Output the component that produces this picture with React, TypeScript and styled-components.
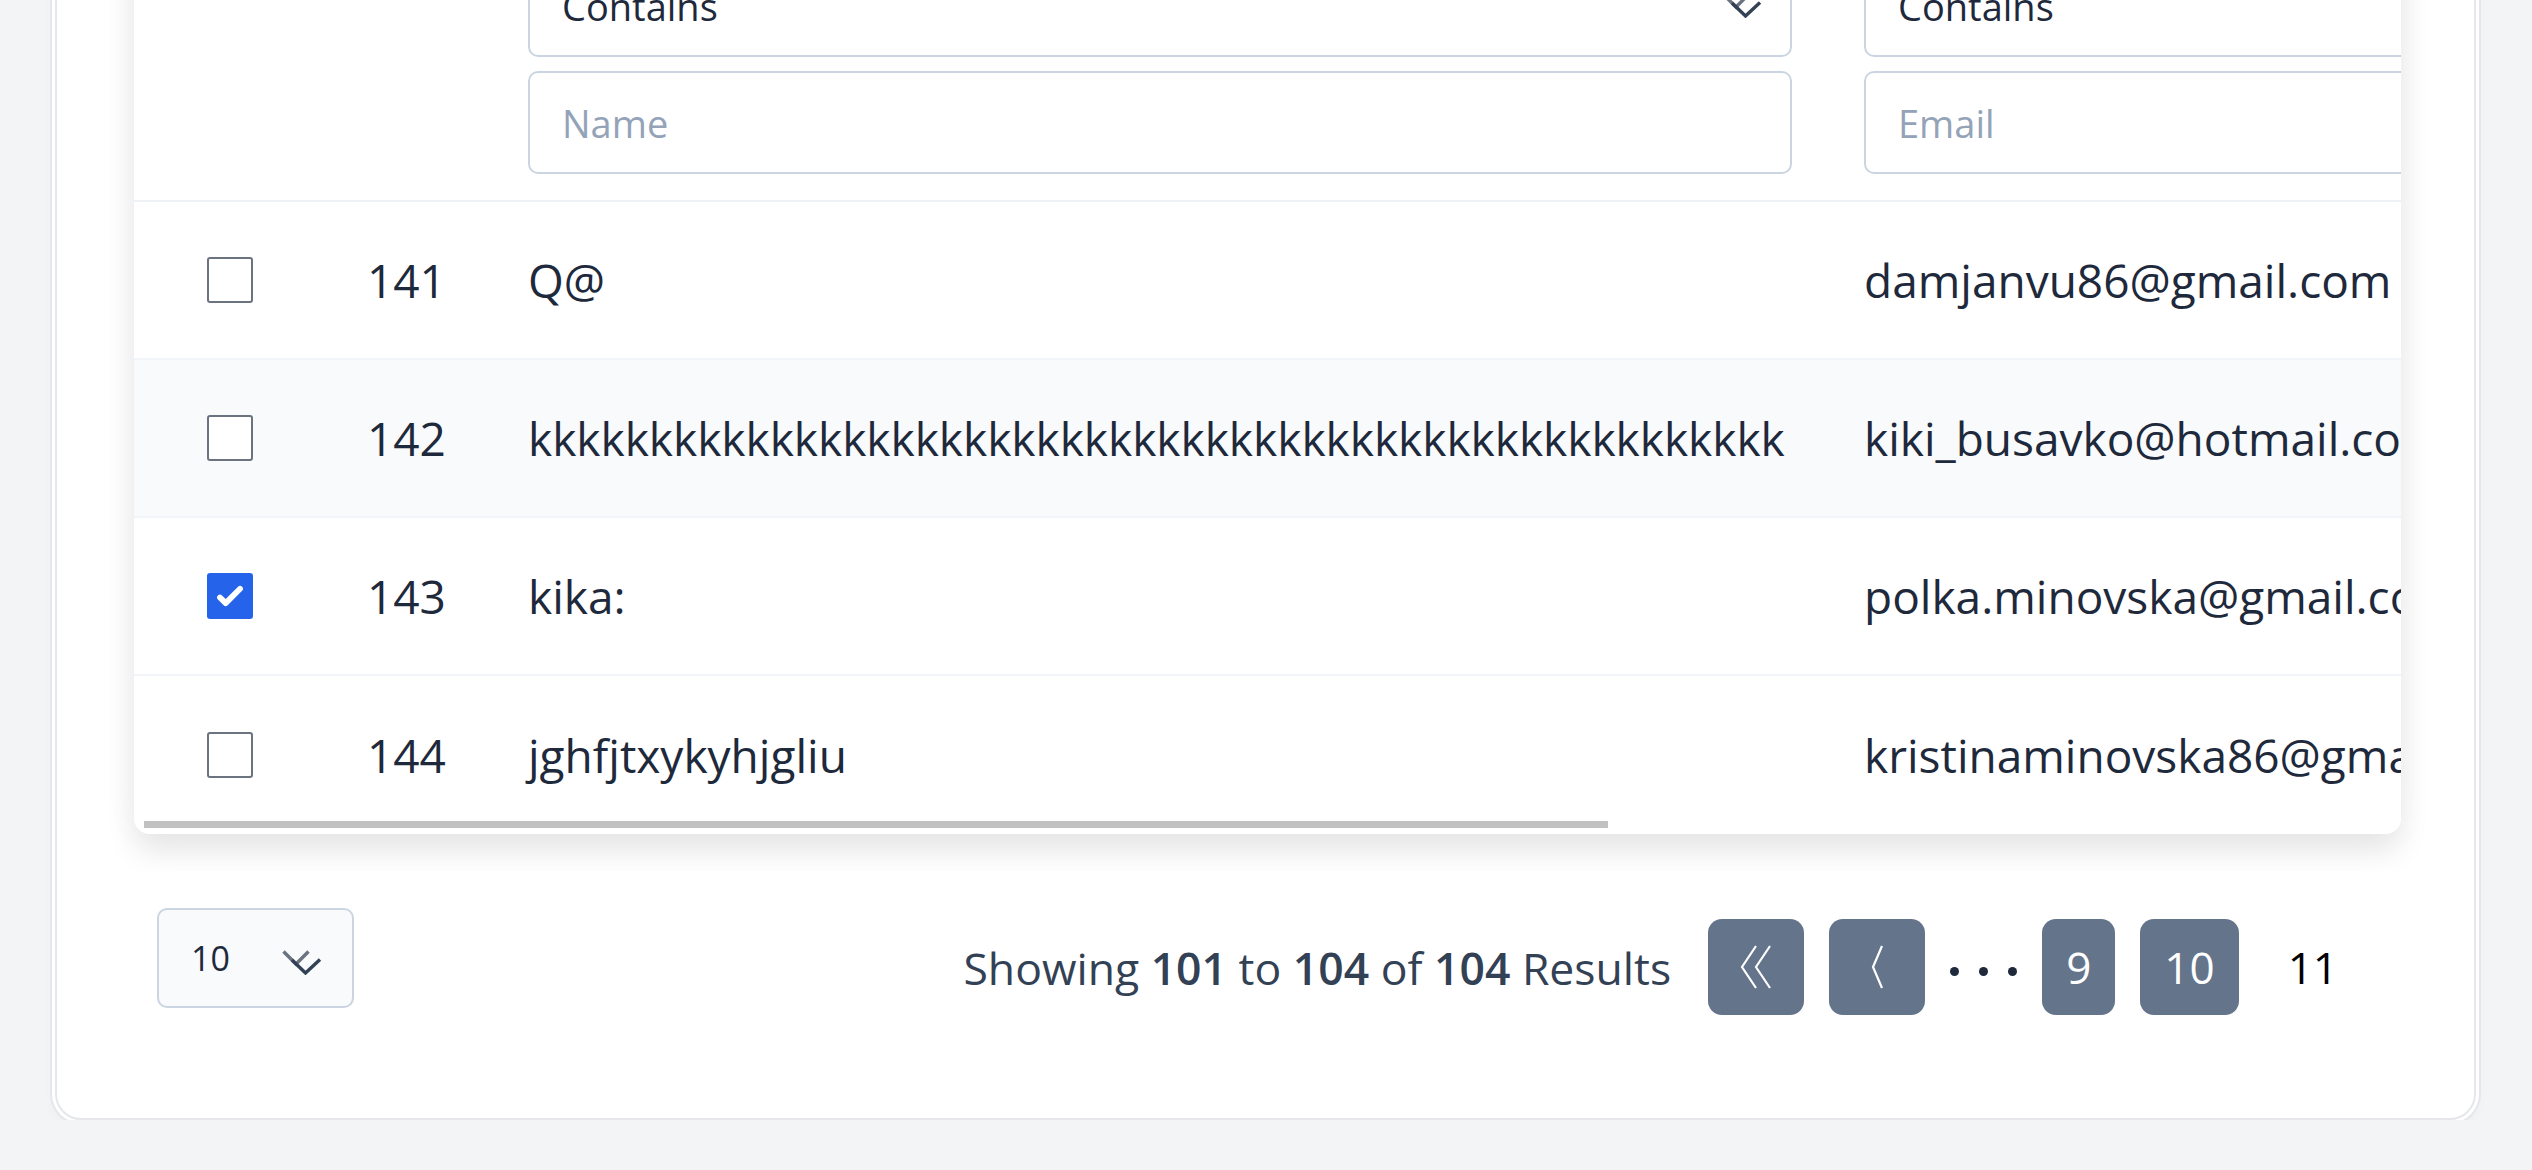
import React from "react";
import styled, { createGlobalStyle } from "styled-components";

const COLUMNS = "197px 161px 1336px 1336px 480px";

type User = {
  id: number;
  name: string;
  email: string;
  checked?: boolean;
  shaded?: boolean;
};

const users: User[] = [
  { id: 141, name: "Q@", email: "damjanvu86@gmail.com" },
  { id: 142, name: "k".repeat(52), email: "kiki_busavko@hotmail.com", shaded: true },
  { id: 143, name: "kika:", email: "polka.minovska@gmail.com", checked: true },
  { id: 144, name: "jghfjtxykyhjgliu", email: "kristinaminovska86@gmail.com" },
];

const GlobalStyle = createGlobalStyle`
  html, body {
    margin: 0;
    padding: 0;
    background: #f3f4f6;
    overflow: hidden;
  }
  body {
    font-family: "Segoe UI", "Open Sans", "Noto Sans", sans-serif;
    color: #1e293b;
  }
  * {
    box-sizing: border-box;
  }
`;

const SelectChevron = () => (
  <svg width="40" height="25" viewBox="0 0 40 25" fill="none">
    <polyline points="1.5,1.5 14,14 26.5,1.5" stroke="#6b7280" strokeWidth="3.4" />
    <polyline points="10,10 23.5,23 38,9.5" stroke="#334155" strokeWidth="3.4" />
  </svg>
);

const DoubleLeft = () => (
  <svg width="34" height="44" viewBox="0 0 34 44" fill="none">
    <polyline points="17,1 3,22 17,43" stroke="#fff" strokeWidth="2.2" />
    <polyline points="31,1 17,22 31,43" stroke="#fff" strokeWidth="2.2" />
  </svg>
);

const SingleLeft = () => (
  <svg width="14" height="44" viewBox="0 0 14 44" fill="none">
    <polyline points="12,1 3,22 12,43" stroke="#fff" strokeWidth="2.2" />
  </svg>
);

const CheckMark = () => (
  <svg width="46" height="46" viewBox="0 0 16 16" fill="#fff">
    <path d="M12.207 4.793a1 1 0 010 1.414l-5 5a1 1 0 01-1.414 0l-2-2a1 1 0 011.414-1.414L6.5 9.086l4.293-4.293a1 1 0 011.414 0z" />
  </svg>
);

export default function App() {
  return (
    <>
      <GlobalStyle />
      <Page>
        <Panel>
          <TableCard>
            <TableGrid>
              <HeaderRow>
                <HeaderCell />
                <HeaderCell />
                <HeaderCell>
                  <FilterSelect>
                    <span>Contains</span>
                    <SelectChevron />
                  </FilterSelect>
                  <FilterInput placeholder="Name" />
                </HeaderCell>
                <HeaderCell>
                  <FilterSelect>
                    <span>Contains</span>
                    <SelectChevron />
                  </FilterSelect>
                  <FilterInput placeholder="Email" />
                </HeaderCell>
                <HeaderCell />
              </HeaderRow>
              {users.map((u) => (
                <Row key={u.id} $shaded={u.shaded}>
                  <CheckCell>
                    <Checkbox $checked={u.checked}>{u.checked && <CheckMark />}</Checkbox>
                  </CheckCell>
                  <Cell>{u.id}</Cell>
                  <Cell>{u.name}</Cell>
                  <Cell>{u.email}</Cell>
                  <Cell />
                </Row>
              ))}
            </TableGrid>
            <ScrollThumb />
          </TableCard>
          <Footer>
            <PageSizeSelect>
              <span>10</span>
              <SelectChevron />
            </PageSizeSelect>
            <Pagination>
              <Summary>
                Showing <b>101</b> to <b>104</b> of <b>104</b> Results
              </Summary>
              <PageButton $square>
                <DoubleLeft />
              </PageButton>
              <PageButton $square>
                <SingleLeft />
              </PageButton>
              <Dots>
                <Dot />
                <Dot />
                <Dot />
              </Dots>
              <PageButton>9</PageButton>
              <PageButton>10</PageButton>
              <PageNumber>11</PageNumber>
            </Pagination>
          </Footer>
        </Panel>
      </Page>
    </>
  );
}

const Page = styled.div`
  margin-top: -100px;
  padding-left: 55px;
`;

const Panel = styled.div`
  width: 2421px;
  background: #fff;
  border: 2px solid #e5e7eb;
  border-radius: 26px;
  box-shadow: 0 0 0 3px #fff, 0 0 0 5px #e6e7ea, 0 8px 14px rgba(0, 0, 0, 0.04);
  padding: 26px 73px 0 77px;
`;

const TableCard = styled.div`
  position: relative;
  background: #fff;
  border-radius: 16px;
  overflow: hidden;
  box-shadow: 0 18px 30px rgba(0, 0, 0, 0.09), 0 0 40px rgba(0, 0, 0, 0.03);
`;

const TableGrid = styled.div`
  width: 3510px;
  font-size: 46px;
`;

const HeaderRow = styled.div`
  display: grid;
  grid-template-columns: ${COLUMNS};
  border-bottom: 2px solid #eef2f6;
`;

const HeaderCell = styled.div`
  display: flex;
  flex-direction: column;
  gap: 14px;
  padding: 26px 36px;
  min-height: 272px;
`;

const FilterSelect = styled.div`
  display: flex;
  align-items: center;
  justify-content: space-between;
  width: 1264px;
  height: 103px;
  padding: 0 28px 0 32px;
  border: 2px solid #cbd5e1;
  border-radius: 10px;
  background: #fff;
  font-size: 38px;
  color: #1e293b;
`;

const FilterInput = styled.input`
  width: 1264px;
  height: 103px;
  padding: 0 32px;
  border: 2px solid #cbd5e1;
  border-radius: 10px;
  background: #fff;
  font-family: inherit;
  font-size: 38px;
  color: #1e293b;
  outline: none;
  &::placeholder {
    color: #94a3b8;
  }
`;

const Row = styled.div<{ $shaded?: boolean }>`
  display: grid;
  grid-template-columns: ${COLUMNS};
  height: 158px;
  align-items: center;
  background: ${({ $shaded }) => ($shaded ? "#f8fafc" : "#fff")};
  border-bottom: 2px solid #f1f5f9;
  &:last-child {
    border-bottom: none;
  }
`;

const Cell = styled.div`
  padding: 0 36px;
  white-space: nowrap;
  color: #1e293b;
`;

const CheckCell = styled.div`
  display: flex;
  align-items: center;
  padding-left: 73px;
`;

const Checkbox = styled.span<{ $checked?: boolean }>`
  display: flex;
  width: 46px;
  height: 46px;
  border-radius: 3px;
  border: ${({ $checked }) => ($checked ? "none" : "2px solid #6b7280")};
  background: ${({ $checked }) => ($checked ? "#2563eb" : "#fff")};
`;

const ScrollThumb = styled.div`
  position: absolute;
  left: 10px;
  bottom: 6px;
  width: 1464px;
  height: 7px;
  background: #c1c1c1;
`;

const Footer = styled.div`
  position: relative;
  display: flex;
  justify-content: space-between;
  align-items: flex-start;
  margin-top: 37px;
  padding: 37px 39px 103px 23px;
  background: #fff;
`;

const PageSizeSelect = styled.div`
  display: flex;
  align-items: center;
  justify-content: space-between;
  width: 197px;
  height: 100px;
  padding: 0 30px 0 32px;
  border: 2px solid #cbd5e1;
  border-radius: 10px;
  background: #f8fafc;
  font-size: 34px;
  color: #1e293b;
  svg {
    margin-top: 8px;
  }
`;

const Pagination = styled.div`
  display: flex;
  align-items: center;
  gap: 25px;
  margin-top: 11px;
  height: 96px;
`;

const Summary = styled.div`
  margin-right: 12px;
  font-size: 44.5px;
  color: #334155;
  b {
    font-weight: 600;
  }
`;

const PageButton = styled.div<{ $square?: boolean }>`
  display: flex;
  align-items: center;
  justify-content: center;
  height: 96px;
  min-width: ${({ $square }) => ($square ? "96px" : "73px")};
  padding: ${({ $square }) => ($square ? "0" : "0 24px")};
  border-radius: 14px;
  background: #64748b;
  color: #fff;
  font-size: 44px;
`;

const PageNumber = styled.div`
  padding: 0 24px;
  font-size: 44px;
  color: #000;
`;

const Dots = styled.div`
  display: flex;
  align-items: center;
  gap: 20px;
  padding-top: 8px;
`;

const Dot = styled.span`
  width: 9px;
  height: 9px;
  border-radius: 50%;
  background: #1e293b;
`;
